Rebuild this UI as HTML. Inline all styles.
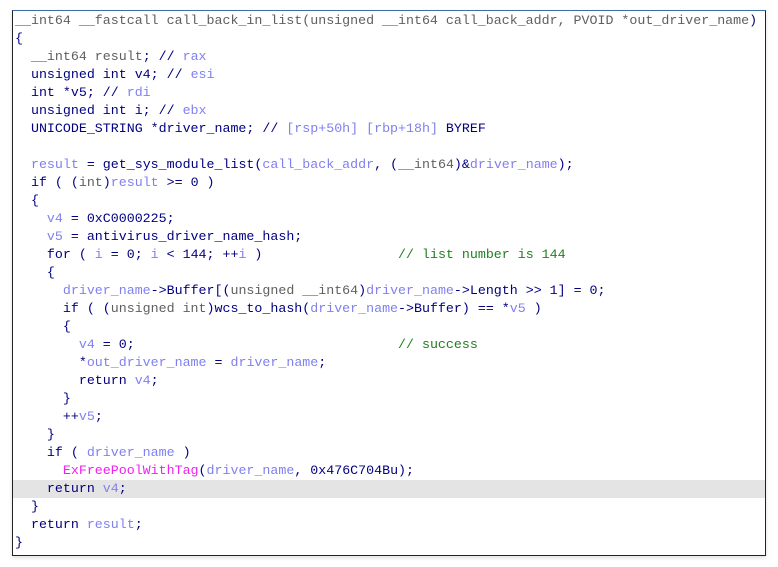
<!DOCTYPE html>
<html><head><meta charset="utf-8"><style>
html,body{margin:0;padding:0;background:#fff;width:778px;height:567px;overflow:hidden}
.box{position:absolute;left:12px;top:10px;width:752px;height:544px;border:1px solid #222;border-top-color:#3a6ea8;background:#fff;box-shadow:0 2px 4px rgba(0,0,0,.12)}
.hl{position:absolute;left:0;top:469px;width:752px;height:18px;background:#e4e4e4}
pre{position:absolute;left:2px;top:1px;margin:0;font-family:"Liberation Mono",monospace;font-size:13.3px;line-height:18px;color:#000080;white-space:pre}
.g{color:#5f5f5f}.v{color:#8080f0}.m{color:#f020f0}.c{color:#208020}
</style></head><body>
<div class="box"><div class="hl"></div>
<pre><span class="g">__int64 __fastcall call_back_in_list(unsigned __int64 call_back_addr, PVOID *out_driver_name</span>)
{
  <span class="g">__int64 result</span>; // <span class="v">rax</span>
  unsigned int v4; // <span class="v">esi</span>
  int *v5; // <span class="v">rdi</span>
  unsigned int i; // <span class="v">ebx</span>
  UNICODE_STRING *driver_name; // <span class="v">[rsp+50h] [rbp+18h]</span> BYREF

  <span class="v">result</span> = get_sys_module_list(<span class="v">call_back_addr</span>, (<span class="g">__int64</span>)&amp;<span class="v">driver_name</span>);
  if ( (<span class="g">int</span>)<span class="v">result</span> &gt;= 0 )
  {
    <span class="v">v4</span> = 0xC0000225;
    <span class="v">v5</span> = antivirus_driver_name_hash;
    for ( <span class="v">i</span> = 0; <span class="v">i</span> &lt; 144; ++<span class="v">i</span> )                 <span class="c">// list number is 144</span>
    {
      <span class="v">driver_name</span>-&gt;Buffer[(<span class="g">unsigned __int64</span>)<span class="v">driver_name</span>-&gt;Length &gt;&gt; 1] = 0;
      if ( (<span class="g">unsigned int</span>)wcs_to_hash(<span class="v">driver_name</span>-&gt;Buffer) == *<span class="v">v5</span> )
      {
        <span class="v">v4</span> = 0;                                 <span class="c">// success</span>
        *<span class="v">out_driver_name</span> = <span class="v">driver_name</span>;
        return <span class="v">v4</span>;
      }
      ++<span class="v">v5</span>;
    }
    if ( <span class="v">driver_name</span> )
      <span class="m">ExFreePoolWithTag</span>(<span class="v">driver_name</span>, 0x476C704Bu);
    return <span class="v">v4</span>;
  }
  return <span class="v">result</span>;
}</pre></div>
</body></html>
